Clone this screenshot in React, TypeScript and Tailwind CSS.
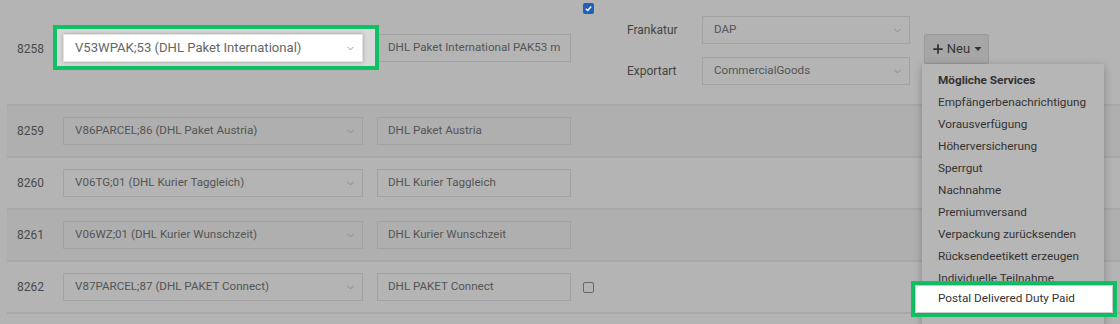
import { ChevronDown, Plus } from 'lucide-react';

type Row = {
  id: string;
  product: string;
  name: string;
  striped: boolean;
  checkbox?: boolean;
};

const rows: Row[] = [
  { id: '8259', product: 'V86PARCEL;86 (DHL Paket Austria)', name: 'DHL Paket Austria', striped: true },
  { id: '8260', product: 'V06TG;01 (DHL Kurier Taggleich)', name: 'DHL Kurier Taggleich', striped: false },
  { id: '8261', product: 'V06WZ;01 (DHL Kurier Wunschzeit)', name: 'DHL Kurier Wunschzeit', striped: true },
  { id: '8262', product: 'V87PARCEL;87 (DHL PAKET Connect)', name: 'DHL PAKET Connect', striped: false, checkbox: true },
];

const services = [
  'Empfängerbenachrichtigung',
  'Vorausverfügung',
  'Höherversicherung',
  'Sperrgut',
  'Nachnahme',
  'Premiumversand',
  'Verpackung zurücksenden',
  'Rücksendeetikett erzeugen',
  'Individuelle Teilnahme',
];

// graues Select im abgedunkelten Zustand
function DimSelect({ value, width }: { value: string; width: string }) {
  return (
    <div className={`${width} h-[28px] border border-[#a2a2a2] flex items-center justify-between pl-[11px] pr-[6px] text-[11.6px] text-[#555]`}>
      <span>{value}</span>
      <ChevronDown size={11} strokeWidth={1.5} className="text-[#7a7a7a]" />
    </div>
  );
}

function DimInput({ value }: { value: string }) {
  return (
    <div className="w-[194px] h-[28px] border border-[#a2a2a2] flex items-center pl-[10px] text-[11.6px] text-[#555] overflow-hidden whitespace-nowrap">
      {value}
    </div>
  );
}

export default function App() {
  return (
    <div
      className="relative w-[1120px] h-[324px] overflow-hidden bg-[#b4b4b4] text-[12px] text-[#4a4a4a]"
      style={{ fontFamily: 'Roboto, "Liberation Sans", sans-serif' }}
    >
      <div className="ml-[7px]">
        {/* erste Zeile mit Frankatur / Exportart */}
        <div className="h-[106px] border-b-2 border-[#a8a8a8] flex">
          <div className="w-[56px] pl-[10px] pt-[40px]">8258</div>
          <div className="relative w-[300px] mt-[34px] h-[28px]">
            <div className="absolute -left-[10px] -top-[9px] w-[326px] h-[45px] border-[4px] border-[#10c064] bg-[#d8d8d8]" />
            <div className="relative h-[28px] bg-white border border-[#e2e2e2] shadow-[0_0_4px_rgba(0,0,0,0.25)] flex items-center justify-between pl-[11px] pr-[6px] text-[13.1px] text-[#666]">
              <span>V53WPAK;53 (DHL Paket International)</span>
              <ChevronDown size={11} strokeWidth={1.5} className="text-[#777]" />
            </div>
          </div>
          <div className="ml-[14px] mt-[34px]">
            <DimInput value="DHL Paket International PAK53 m" />
          </div>
          <div className="ml-[12px] pt-[3px]">
            <div className="w-[11px] h-[11px] rounded-[2px] bg-[#1f5fb8] flex items-center justify-center">
              <svg width="9" height="9" viewBox="0 0 10 10">
                <path d="M2 5.2 L4.2 7.3 L8 2.8" fill="none" stroke="white" strokeWidth="1.6" />
              </svg>
            </div>
          </div>
          <div className="ml-[33px] flex flex-col gap-[13px] pt-[16px] text-[#444]">
            <div className="flex items-center">
              <div className="w-[75px] text-right pr-[27px]">Frankatur</div>
              <DimSelect value="DAP" width="w-[208px]" />
            </div>
            <div className="flex items-center">
              <div className="w-[75px] text-right pr-[27px]">Exportart</div>
              <DimSelect value="CommercialGoods" width="w-[208px]" />
            </div>
          </div>
          <div className="ml-[14px] pt-[34px]">
            <div className="w-[65px] h-[30px] bg-[#a6a6a6] border border-[#9a9a9a] rounded-[2px] flex items-center justify-center gap-[2px] text-[13px] text-[#333]">
              <Plus size={14} strokeWidth={3} />
              <span>Neu</span>
              <svg width="8" height="6" viewBox="0 0 8 6" className="ml-[2px]">
                <path d="M0.5 1 L7.5 1 L4 5 Z" fill="#333" />
              </svg>
            </div>
          </div>
        </div>

        {rows.map((row) => (
          <div
            key={row.id}
            className={`h-[52px] border-b-2 border-[#a8a8a8] flex items-center ${row.striped ? 'bg-[#afafaf]' : ''}`}
          >
            <div className="w-[56px] pl-[10px]">{row.id}</div>
            <DimSelect value={row.product} width="w-[300px]" />
            <div className="ml-[14px]">
              <DimInput value={row.name} />
            </div>
            {row.checkbox && (
              <div className="ml-[12px] w-[11px] h-[11px] rounded-[2px] border border-[#666]" />
            )}
          </div>
        ))}
      </div>

      {/* Dropdown "Neu" */}
      <div className="absolute left-[922px] top-[64px] w-[182px] h-[270px] bg-[#b6b6b6] shadow-[0_2px_8px_rgba(0,0,0,0.25)] pt-[6px] text-[11.75px] text-[#333]">
        <div className="pl-[16px] h-[21px] leading-[21px] font-bold">Mögliche Services</div>
        {services.map((s) => (
          <div key={s} className="pl-[16px] h-[22px] leading-[22px]">
            {s}
          </div>
        ))}
      </div>

      {/* hervorgehobener Eintrag */}
      <div className="absolute left-[911px] top-[281px] w-[206px] h-[36px] border-[4px] border-[#10c064] bg-[#dcdcdc] p-[1px]">
        <div className="h-full bg-white shadow-[0_0_4px_rgba(0,0,0,0.2)] pl-[22px] flex items-center text-[11.75px] text-[#333]">
          Postal Delivered Duty Paid
        </div>
      </div>
    </div>
  );
}
